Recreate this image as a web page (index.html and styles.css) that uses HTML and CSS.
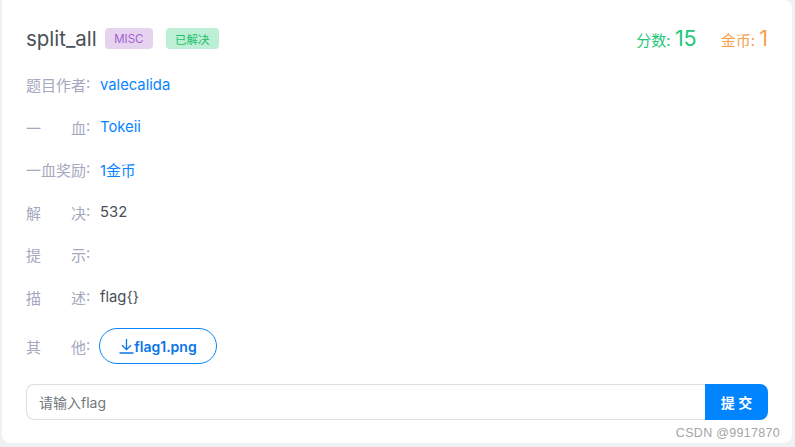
FILE: index.html
```html
<!DOCTYPE html>
<html lang="zh-CN">

<head>
    <meta charset="UTF-8">
    <title>split_all</title>
    <link rel="stylesheet" href="styles.css">
</head>

<body>
    <div class="card">
        <div class="head">
            <h2>split_all</h2>
            <span class="tag tag-misc">MISC</span>
            <span class="tag tag-done">已解决</span>
            <div class="score">
                <span class="score-green">分数: <b>15</b></span>
                <span class="score-orange">金币: <b>1</b></span>
            </div>
        </div>

        <div class="row"><span class="label"><i>题目作者</i>:</span><span class="link">valecalida</span></div>
        <div class="row"><span class="label"><i>一血</i>:</span><span class="link">Tokeii</span></div>
        <div class="row"><span class="label"><i>一血奖励</i>:</span><span class="link">1金币</span></div>
        <div class="row"><span class="label"><i>解决</i>:</span><span>532</span></div>
        <div class="row"><span class="label"><i>提示</i>:</span></div>
        <div class="row"><span class="label"><i>描述</i>:</span><span>flag{}</span></div>
        <div class="row row-file">
            <span class="label"><i>其他</i>:</span>
            <a class="file-btn">
                <svg width="15" height="16" viewBox="0 0 15 16" fill="none" stroke="currentColor" stroke-width="1.3">
                    <path d="M7.5 1v10.5M3 7.2l4.5 4.5L12 7.2M0.5 15h14" />
                </svg>flag1.png
            </a>
        </div>

        <div class="submit">
            <div class="input">请输入flag</div>
            <button>提 交</button>
        </div>
    </div>
    <span class="mark">CSDN @9917870</span>
</body>

</html>
```

FILE: styles.css
```css
* {
    box-sizing: border-box;
    margin: 0;
    padding: 0;
}

html,
body {
    height: 447px;
    overflow: hidden;
}

body {
    background: #eef0f3;
    font-family: Inter, "Noto Sans CJK SC", sans-serif;
    font-size: 14.8px;
    color: #4a4f57;
    position: relative;
}

.card {
    width: 790px;
    height: 443px;
    margin-left: 2px;
    padding: 24px 24px 0;
    background: #fff;
    border-radius: 0 8px 8px 8px;
}

.head {
    display: flex;
    align-items: center;
    height: 28px;
    margin-bottom: 11.5px;
}

.head h2 {
    font-size: 20.5px;
    font-weight: 400;
    margin-right: 8px;
}

.tag {
    display: flex;
    align-items: center;
    justify-content: center;
    height: 21px;
    margin-top: 1px;
    border-radius: 4px;
    font-size: 11.5px;
}

.tag-misc {
    width: 48px;
    margin-right: 13px;
    background: #e6d3f0;
    color: #a45fd0;
}

.tag-done {
    width: 53px;
    background: #bdefd6;
    color: #25c26e;
}

.score {
    margin-left: auto;
    display: flex;
    align-items: baseline;
    gap: 24px;
    font-size: 15px;
}

.score b {
    font-size: 21.5px;
    font-weight: 400;
}

.score-green {
    color: #1fc77a;
}

.score-orange {
    color: #f7a04b;
}

.row {
    display: flex;
    align-items: center;
    height: 42.5px;
}

.label {
    display: flex;
    width: 64px;
    margin-right: 10px;
    color: #a5a8be;
}

.label i {
    flex: none;
    width: 60px;
    font-style: normal;
    font-size: 15px;
    text-align: justify;
    text-align-last: justify;
}

.link {
    color: #0a84ff;
}

.row-file {
    height: 55px;
}

.file-btn {
    display: flex;
    align-items: center;
    justify-content: center;
    width: 118px;
    height: 36px;
    margin-left: -1px;
    border: 1px solid #0a84ff;
    border-radius: 18px;
    color: #0a74ea;
    font-weight: 600;
    font-size: 14px;
}

.submit {
    display: flex;
    height: 36px;
    margin-top: 10.5px;
}

.input {
    flex: 1;
    display: flex;
    align-items: center;
    padding-left: 12px;
    border: 1px solid #dfdfe3;
    border-right: none;
    border-radius: 8px 0 0 8px;
    color: #72767d;
    font-size: 14px;
}

.submit button {
    width: 63px;
    border: none;
    border-radius: 0 8px 8px 0;
    background: #0084ff;
    color: #fff;
    font-family: inherit;
    font-size: 14px;
    font-weight: 600;
}

.mark {
    position: absolute;
    top: 426px;
    right: 15px;
    font-family: "Liberation Sans", "Noto Sans", sans-serif;
    font-size: 12.5px;
    letter-spacing: 0.3px;
    color: #a5a5a5;
}
```
